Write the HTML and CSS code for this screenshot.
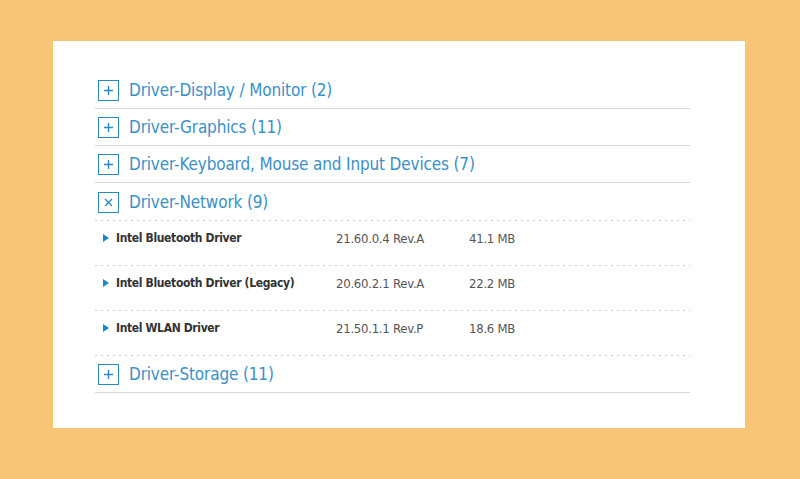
FILE: index.html
```html
<!DOCTYPE html>
<html lang="en">
<head>
<meta charset="utf-8">
<title>Drivers</title>
<link rel="stylesheet" href="styles.css">
</head>
<body>
<div class="card">
  <div class="list">
    <div class="group">
      <div class="head">
        <span class="box"><svg viewBox="0 0 21 21" width="21" height="21"><path d="M10.5 6v9M6 10.5h9" stroke="#2b86c4" stroke-width="1.4" fill="none"/></svg></span>
        <span class="title">Driver-Display / Monitor (2)</span>
      </div>
    </div>
    <div class="group">
      <div class="head">
        <span class="box"><svg viewBox="0 0 21 21" width="21" height="21"><path d="M10.5 6v9M6 10.5h9" stroke="#2b86c4" stroke-width="1.4" fill="none"/></svg></span>
        <span class="title">Driver-Graphics (11)</span>
      </div>
    </div>
    <div class="group">
      <div class="head">
        <span class="box"><svg viewBox="0 0 21 21" width="21" height="21"><path d="M10.5 6v9M6 10.5h9" stroke="#2b86c4" stroke-width="1.4" fill="none"/></svg></span>
        <span class="title">Driver-Keyboard, Mouse and Input Devices (7)</span>
      </div>
    </div>
    <div class="group open">
      <div class="head">
        <span class="box"><svg viewBox="0 0 21 21" width="21" height="21"><path d="M7 7l7 7M14 7l-7 7" stroke="#2b86c4" stroke-width="1.3" fill="none"/></svg></span>
        <span class="title">Driver-Network (9)</span>
      </div>
      <div class="item">
        <span class="tri"></span>
        <span class="name">Intel Bluetooth Driver</span>
        <span class="ver">21.60.0.4 Rev.A</span>
        <span class="size">41.1 MB</span>
      </div>
      <div class="item">
        <span class="tri"></span>
        <span class="name">Intel Bluetooth Driver (Legacy)</span>
        <span class="ver">20.60.2.1 Rev.A</span>
        <span class="size">22.2 MB</span>
      </div>
      <div class="item">
        <span class="tri"></span>
        <span class="name">Intel WLAN Driver</span>
        <span class="ver">21.50.1.1 Rev.P</span>
        <span class="size">18.6 MB</span>
      </div>
    </div>
    <div class="group">
      <div class="head">
        <span class="box"><svg viewBox="0 0 21 21" width="21" height="21"><path d="M10.5 6v9M6 10.5h9" stroke="#2b86c4" stroke-width="1.4" fill="none"/></svg></span>
        <span class="title">Driver-Storage (11)</span>
      </div>
    </div>
  </div>
</div>
</body>
</html>
```
FILE: styles.css
```css
html, body {
  margin: 0;
  padding: 0;
}
body {
  background: #f8c577;
  width: 800px;
  height: 479px;
  padding: 41px 55px 51px 53px;
  box-sizing: border-box;
  font-family: "DejaVu Sans Condensed", "DejaVu Sans", sans-serif;
}
.card {
  background: #ffffff;
  height: 100%;
  box-sizing: border-box;
  padding: 31px 55px 0 42px;
}
.list {
  display: flex;
  flex-direction: column;
}
.group {
  border-bottom: 1px solid #d6d6d6;
}
.group.open {
  border-bottom: none;
}
.head {
  height: 36px;
  display: flex;
  align-items: center;
  padding-left: 3px;
  gap: 10px;
}
.group.open .head {
  background: repeating-linear-gradient(90deg, #c9c9c9 0 2px, transparent 2px 6px) bottom / 100% 1px no-repeat;
  height: 38px;
}
.box {
  width: 21px;
  height: 21px;
  box-sizing: border-box;
  border: 1.5px solid #2b86c4;
  display: flex;
  align-items: center;
  justify-content: center;
  margin-top: 1px;
}
.box svg {
  display: block;
  flex: none;
}
.title {
  color: #3a90c9;
  font-size: 17px;
  letter-spacing: -0.15px;
  line-height: 22px;
}
.item {
  display: grid;
  grid-template-columns: 13px 220px 133px 1fr;
  align-items: center;
  padding: 9px 0 20px 8px;
  line-height: 15px;
  height: 45px;
  box-sizing: border-box;
  background: repeating-linear-gradient(90deg, #c9c9c9 0 2px, transparent 2px 6px) bottom / 100% 1px no-repeat;
}
.tri {
  width: 0;
  height: 0;
  border-left: 6px solid #1a85cf;
  border-top: 4.5px solid transparent;
  border-bottom: 4.5px solid transparent;
}
.name {
  font-weight: bold;
  font-size: 12px;
  letter-spacing: -0.35px;
  color: #333333;
}
.ver, .size {
  font-size: 13px;
  letter-spacing: -0.25px;
  color: #555555;
}
```
